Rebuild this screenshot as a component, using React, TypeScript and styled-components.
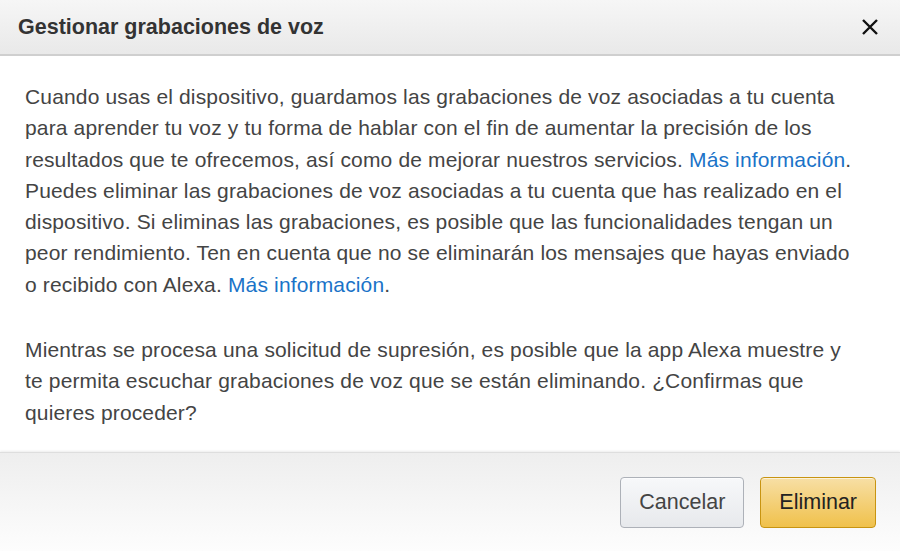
import React from 'react'
import styled, { createGlobalStyle } from 'styled-components'

const GlobalStyle = createGlobalStyle`
  html, body {
    margin: 0;
    padding: 0;
    background: #fff;
  }
  body {
    font-family: 'Liberation Sans', Arial, sans-serif;
  }
`

export default function App() {
  return (
    <>
      <GlobalStyle />
      <SDialog>
        <SHeader>
          <STitle>Gestionar grabaciones de voz</STitle>
          <SClose aria-label="Cerrar">
            <svg width="18" height="16" viewBox="0 0 18 16">
              <path
                d="M2 1 L16 15 M16 1 L2 15"
                stroke="#111"
                strokeWidth="2.4"
                fill="none"
              />
            </svg>
          </SClose>
        </SHeader>
        <SBody>
          <SParagraph>
            Cuando usas el dispositivo, guardamos las grabaciones de voz
            asociadas a tu cuenta para aprender tu voz y tu forma de hablar con
            el fin de aumentar la precisión de los resultados que te ofrecemos,
            así como de mejorar nuestros servicios.{' '}
            <SLink href="#">Más información</SLink>. Puedes eliminar las
            grabaciones de voz asociadas a tu cuenta que has realizado en el
            dispositivo. Si eliminas las grabaciones, es posible que las
            funcionalidades tengan un peor rendimiento. Ten en cuenta que no se
            eliminarán los mensajes que hayas enviado o recibido con Alexa.{' '}
            <SLink href="#">Más información</SLink>.
          </SParagraph>
          <SParagraph>
            Mientras se procesa una solicitud de supresión, es posible que la
            app Alexa muestre y te permita escuchar grabaciones de voz que se
            están eliminando. ¿Confirmas que quieres proceder?
          </SParagraph>
        </SBody>
        <SFooter>
          <SButton variant="secondary">Cancelar</SButton>
          <SButton variant="primary">Eliminar</SButton>
        </SFooter>
      </SDialog>
    </>
  )
}

const SDialog = styled.div`
  width: 900px;
  height: 551px;
  display: flex;
  flex-direction: column;
  background: #fff;
  overflow: hidden;
`

const SHeader = styled.div`
  height: 54px;
  flex-shrink: 0;
  display: flex;
  align-items: center;
  justify-content: space-between;
  padding: 0 21px 0 18px;
  background: linear-gradient(#f6f6f6, #e9e9e9);
  border-bottom: 2px solid #cfcfcf;
`

const STitle = styled.h1`
  margin: 0;
  font-size: 21.5px;
  font-weight: bold;
  color: #333;
`

const SClose = styled.button`
  border: 0;
  background: none;
  padding: 0;
  display: flex;
  cursor: pointer;
`

const SBody = styled.div`
  flex: 1;
  min-height: 0;
  padding: 25px 36px 0 25px;
  color: #444;
  font-size: 21px;
  letter-spacing: 0.15px;
  line-height: 31.3px;
`

const SParagraph = styled.p`
  margin: 0 0 34px;
  &:last-child {
    margin-bottom: 0;
  }
`

const SLink = styled.a`
  color: #1a73c8;
  text-decoration: none;
`

const SFooter = styled.div`
  height: 98px;
  flex-shrink: 0;
  display: flex;
  align-items: center;
  justify-content: flex-end;
  gap: 16px;
  padding: 0 24px 0 0;
  background: linear-gradient(#eeeeee, #fdfdfd);
  box-shadow: 0 -1px 2px rgba(0, 0, 0, 0.08);
  border-top: 1px solid #dedede;
`

const SButton = styled.button<{ variant: 'primary' | 'secondary' }>`
  height: 51px;
  padding: 0 18px;
  border-radius: 4px;
  font-family: 'Liberation Sans', Arial, sans-serif;
  font-size: 21.5px;
  cursor: pointer;
  color: ${({ variant }) => (variant === 'primary' ? '#222' : '#444')};
  border: 1px solid
    ${({ variant }) => (variant === 'primary' ? '#c89411' : '#adb1b8')};
  background: ${({ variant }) =>
    variant === 'primary'
      ? 'linear-gradient(#f7dfa5, #f0c14b)'
      : 'linear-gradient(#f7f8fa, #e7e9ec)'};
  box-shadow: inset 0 1px 0 rgba(255, 255, 255, 0.6);
`
